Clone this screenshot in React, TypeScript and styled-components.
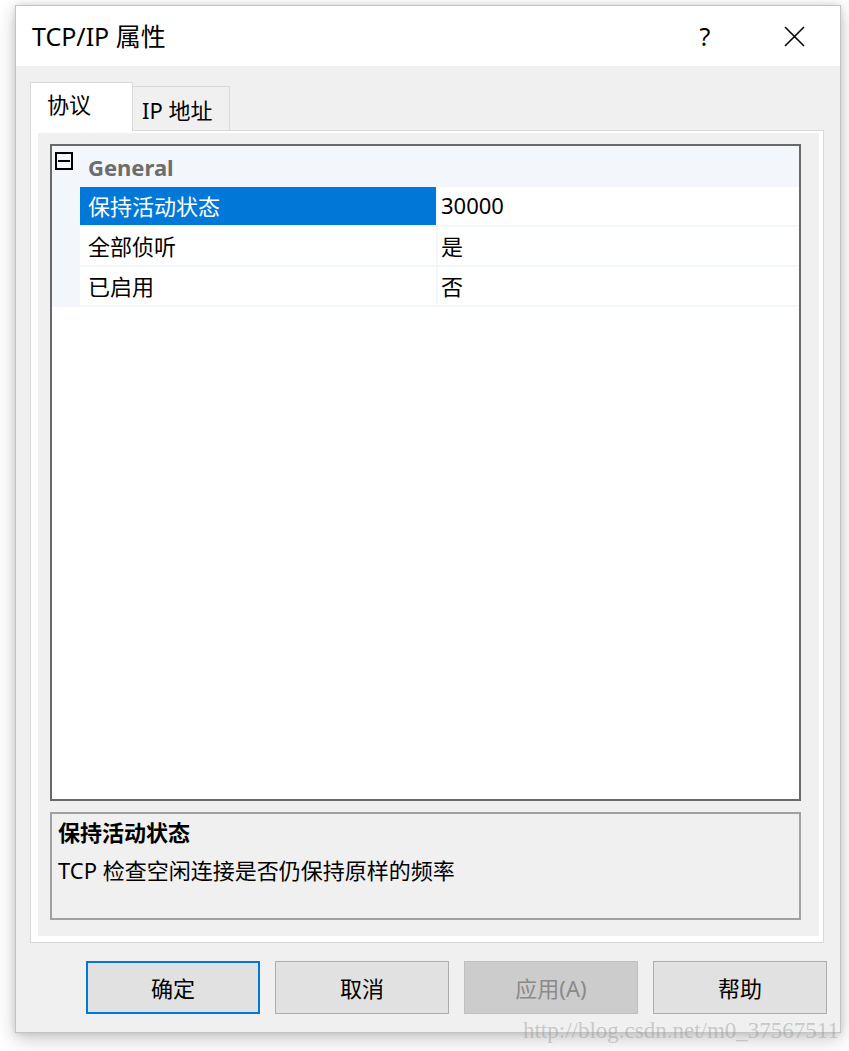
import React from "react";
import styled, { createGlobalStyle } from "styled-components";

const GlobalStyle = createGlobalStyle`
  html, body {
    margin: 0;
    padding: 0;
    background: #ffffff;
  }
  body {
    font-family: "Noto Sans", "Noto Sans CJK SC", sans-serif;
    color: #000;
  }
`;

const Page = styled.div`
  width: 849px;
  height: 1051px;
  padding: 5px 0 0 15px;
  box-sizing: border-box;
`;

const Window = styled.div`
  position: relative;
  width: 826px;
  box-sizing: border-box;
  display: flex;
  flex-direction: column;
  background: #f0f0f0;
  border: 1px solid #c4c4c4;
  box-shadow: 0 6px 18px rgba(0, 0, 0, 0.22), 0 0 6px rgba(0, 0, 0, 0.12);
`;

const TitleBar = styled.div`
  height: 60px;
  display: flex;
  align-items: center;
  background: #ffffff;
  padding-left: 16px;
`;

const Title = styled.div`
  flex: 1;
  font-size: 25px;
  line-height: 30px;
  margin-top: -1px;
`;

const CaptionButton = styled.div<{ $width: number }>`
  width: ${(p) => p.$width}px;
  height: 60px;
  display: flex;
  align-items: center;
  justify-content: center;
  font-size: 25px;
`;

const Body = styled.div`
  display: flex;
  flex-direction: column;
  padding: 16px 16px 0 14px;
`;

const TabStrip = styled.div`
  display: flex;
  align-items: flex-end;
  height: 48px;
  position: relative;
  z-index: 1;
`;

const Tab = styled.div<{ $active?: boolean }>`
  box-sizing: border-box;
  display: flex;
  align-items: center;
  font-size: 22px;
  border: 1px solid #d9d9d9;
  border-bottom: none;
  ${(p) =>
    p.$active
      ? `
    width: 103px;
    height: 49px;
    margin-bottom: -1px;
    background: #ffffff;
    padding: 0 0 8px 16px;
  `
      : `
    width: 97px;
    height: 44px;
    border-left: none;
    background: #f0f0f0;
    padding: 0 0 0 9px;
  `}
`;

const Panel = styled.div`
  height: 813px;
  box-sizing: border-box;
  border: 1px solid #d9d9d9;
  background: #ffffff;
  padding: 2px 4px 6px 7px;
  display: flex;
`;

const PanelInner = styled.div`
  flex: 1;
  background: #f0f0f0;
  padding: 11px 18px 15px 12px;
  display: flex;
  flex-direction: column;
  gap: 11px;
`;

const Grid = styled.div`
  height: 657px;
  box-sizing: border-box;
  border: 2px solid #696969;
  background: #ffffff;
  display: flex;
  flex-direction: column;
`;

const CategoryRow = styled.div`
  height: 41px;
  display: flex;
  background: #f3f6fb;
`;

const Gutter = styled.div`
  width: 28px;
  flex: none;
  background: #f3f6fb;
`;

const ExpandBox = styled.div`
  width: 18px;
  height: 18px;
  box-sizing: border-box;
  margin: 6px 0 0 3px;
  border: 2px solid #000;
  display: flex;
  align-items: center;
  justify-content: center;
  &::after {
    content: "";
    width: 12px;
    height: 2px;
    background: #000;
  }
`;

const CategoryLabel = styled.div`
  padding-left: 8px;
  font-size: 22px;
  font-weight: 700;
  color: #6d6d6d;
  display: flex;
  align-items: center;
`;

const PropRow = styled.div`
  height: 40px;
  box-sizing: border-box;
  display: flex;
  border-bottom: 2px solid #f3f6fb;
`;

const Cell = styled.div<{ $selected?: boolean; $name?: boolean }>`
  display: flex;
  align-items: center;
  padding-bottom: 2px;
  font-size: 22px;
  white-space: nowrap;
  ${(p) =>
    p.$name
      ? `
    width: 358px;
    flex: none;
    padding-left: 8px;
    box-sizing: border-box;
    border-right: 2px solid #f3f6fb;
  `
      : `
    flex: 1;
    padding-left: 3px;
  `}
  background: ${(p) => (p.$selected ? "#0078d7" : "#ffffff")};
  color: ${(p) => (p.$selected ? "#ffffff" : "#000000")};
`;

const DescBox = styled.div`
  height: 108px;
  box-sizing: border-box;
  border: 2px solid #a0a0a0;
  background: #f0f0f0;
  padding: 3px 6px;
`;

const DescTitle = styled.div`
  font-size: 22px;
  line-height: 30px;
  font-weight: 700;
`;

const DescText = styled.div`
  font-size: 22px;
  line-height: 30px;
  margin-top: 8px;
`;

const Footer = styled.div`
  display: flex;
  justify-content: flex-end;
  gap: 15px;
  padding: 18px 13px 18px 0;
`;

const Button = styled.div<{ $default?: boolean; $disabled?: boolean }>`
  width: 174px;
  height: 53px;
  box-sizing: border-box;
  display: flex;
  align-items: center;
  justify-content: center;
  padding-bottom: 2px;
  font-size: 22px;
  background: ${(p) => (p.$disabled ? "#cccccc" : "#e1e1e1")};
  color: ${(p) => (p.$disabled ? "#8a8a8a" : "#000000")};
  border: ${(p) =>
    p.$default
      ? "2px solid #0078d7"
      : p.$disabled
      ? "1px solid #bfbfbf"
      : "1px solid #adadad"};
`;

const Watermark = styled.div`
  position: absolute;
  right: 1px;
  bottom: -12px;
  font-family: "Liberation Serif", serif;
  font-size: 23px;
  color: rgba(150, 150, 150, 0.45);
  pointer-events: none;
`;

const CloseIcon = () => (
  <svg width="21" height="21" viewBox="0 0 21 21">
    <path d="M1 1 L20 20 M20 1 L1 20" stroke="#000" strokeWidth="1.6" fill="none" />
  </svg>
);

const rows = [
  { name: "保持活动状态", value: "30000", selected: true },
  { name: "全部侦听", value: "是" },
  { name: "已启用", value: "否" },
];

const App = () => {
  return (
    <Page>
      <GlobalStyle />
      <Window>
        <TitleBar>
          <Title>TCP/IP 属性</Title>
          <CaptionButton $width={60}>?</CaptionButton>
          <CaptionButton $width={13} />
          <CaptionButton $width={92}>
            <CloseIcon />
          </CaptionButton>
        </TitleBar>
        <Body>
          <TabStrip>
            <Tab $active>协议</Tab>
            <Tab>IP 地址</Tab>
          </TabStrip>
          <Panel>
            <PanelInner>
              <Grid>
                <CategoryRow>
                  <Gutter>
                    <ExpandBox />
                  </Gutter>
                  <CategoryLabel>General</CategoryLabel>
                </CategoryRow>
                {rows.map((row) => (
                  <PropRow key={row.name}>
                    <Gutter />
                    <Cell $name $selected={row.selected}>
                      {row.name}
                    </Cell>
                    <Cell>{row.value}</Cell>
                  </PropRow>
                ))}
              </Grid>
              <DescBox>
                <DescTitle>保持活动状态</DescTitle>
                <DescText>TCP 检查空闲连接是否仍保持原样的频率</DescText>
              </DescBox>
            </PanelInner>
          </Panel>
        </Body>
        <Footer>
          <Button $default>确定</Button>
          <Button>取消</Button>
          <Button $disabled>应用(A)</Button>
          <Button>帮助</Button>
        </Footer>
        <Watermark>http://blog.csdn.net/m0_37567511</Watermark>
      </Window>
    </Page>
  );
};

export default App;
